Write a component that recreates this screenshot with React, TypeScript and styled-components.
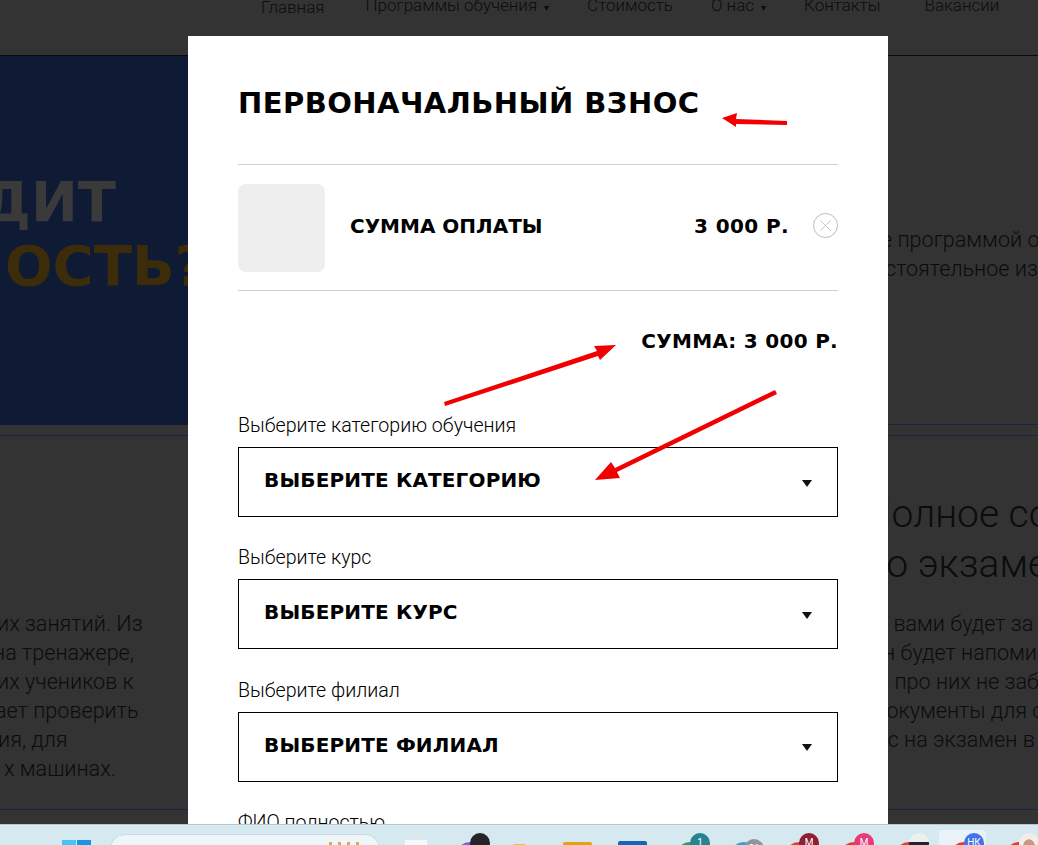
import React from "react";
import styled, { createGlobalStyle } from "styled-components";

const GlobalStyle = createGlobalStyle`
  html, body {
    margin: 0;
    padding: 0;
    background: #333333;
    font-family: "Roboto", "Liberation Sans", sans-serif;
  }
`;

const fields = [
  { label: "Выберите категорию обучения", value: "Выберите категорию" },
  { label: "Выберите курс", value: "Выберите курс" },
  { label: "Выберите филиал", value: "Выберите филиал" },
];

const navItems = [
  { text: "Главная", gap: 261, low: true },
  { text: "Программы обучения", gap: 41, caret: true },
  { text: "Стоимость", gap: 38 },
  { text: "О нас", gap: 38, caret: true },
  { text: "Контакты", gap: 38 },
  { text: "Вакансии", gap: 44 },
];

const leftLines = [
  { text: "их занятий. Из", x: -3 },
  { text: "на тренажере,", x: -7 },
  { text: "их учеников к", x: -3 },
  { text: "ает проверить", x: -5 },
  { text: "ия, для", x: -2 },
  { text: "х машинах.", x: 4 },
];

const rightLines = [
  { text: "с вами будет за", x: -8 },
  { text: "он будет напоми", x: -14 },
  { text: "и про них не забудет", x: -8 },
  { text: "документы для сдачи", x: -11 },
  { text: "вас на экзамен в", x: -21 },
];

const trayIcons = [
  { gap: 29, back: "#7c5fd6", front: "#26232b" },
  { gap: 29, back: "#2e9a63", front: "#25848f", badge: "1" },
  { gap: 20, back: "#2f9fe0", front: "#8f9498", badge: "01", low: true },
  { gap: 21, back: "#e53d2b", front: "#8f1f33", badge: "М" },
  { gap: 21, back: "#e53d2b", front: "#e83a78", badge: "М" },
  { gap: 21, back: "#e53d2b", front: "linear-gradient(#eef0ea 0 45%, #23262a 45% 70%, #eef0ea 70%)" },
  { gap: 21, back: "#e53d2b", front: "#3f73e6", badge: "НК", active: true },
  { gap: 21, back: "#e53d2b", front: "radial-gradient(circle at 50% 60%, #c99a80 0 35%, #f1eee8 37%)" },
];

export default function App() {
  return (
    <Screen>
      <GlobalStyle />
      <Site>
        <Header>
          <Nav>
            {navItems.map((item) => (
              <NavItem key={item.text} $gap={item.gap} $low={item.low}>
                {item.text}
                {item.caret && <NavCaret>▾</NavCaret>}
              </NavItem>
            ))}
          </Nav>
        </Header>

        <Hero>
          <HeroBanner>
            <HeroLine>ДИТ</HeroLine>
            <HeroLine $accent>ОСТЬ?</HeroLine>
          </HeroBanner>
          <HeroAside>
            <AsideLine $x={0}>е программой обучения</AsideLine>
            <AsideLine $x={4}>стоятельное изучение</AsideLine>
          </HeroAside>
        </Hero>
        <Strip />

        <Lower>
          <LowerLeft>
            {leftLines.map((line) => (
              <BodyLine key={line.text} $x={line.x}>
                {line.text}
              </BodyLine>
            ))}
          </LowerLeft>
          <LowerRight>
            <BigLine>Полное сопровождение</BigLine>
            <BigLine>до экзамена</BigLine>
            <RightBody>
              {rightLines.map((line) => (
                <BodyLine key={line.text} $x={line.x}>
                  {line.text}
                </BodyLine>
              ))}
            </RightBody>
          </LowerRight>
        </Lower>
        <FootLine />

        <Modal>
          <Title>Первоначальный взнос</Title>
          <CartRow>
            <Thumb />
            <ItemName>Сумма оплаты</ItemName>
            <ItemPrice>3 000 р.</ItemPrice>
            <RemoveIcon viewBox="0 0 25 25">
              <circle cx="12.5" cy="12.5" r="12" fill="none" stroke="#bbb" strokeWidth="1" />
              <path d="M7.5 7.5 L17.5 17.5 M17.5 7.5 L7.5 17.5" stroke="#c4c4c4" strokeWidth="1" />
            </RemoveIcon>
          </CartRow>
          <Total>Сумма: 3 000 р.</Total>
          <Form>
            {fields.map((field) => (
              <Field key={field.label}>
                <FieldLabel>{field.label}</FieldLabel>
                <SelectBox>
                  <SelectText>{field.value}</SelectText>
                  <SelectCaret />
                </SelectBox>
              </Field>
            ))}
            <Field>
              <FieldLabel>ФИО полностью</FieldLabel>
            </Field>
          </Form>
        </Modal>

        <Arrows viewBox="0 0 1038 824">
          <polygon points="722,118 737,113 736,119 787,121 787,125 736,124 736,127" fill="#f00000" />
          <polygon points="616,345 600,360 598,356 445,406 444,402 597,351 594,346" fill="#f00000" />
          <polygon points="595,480 611,462 615,468 775,390 777,394 617,472 620,478" fill="#f00000" />
        </Arrows>
      </Site>

      <Taskbar>
        <WinLogo>
          <WinPane $light />
          <WinPane />
        </WinLogo>
        <SearchPill>
          <SearchDoodle />
        </SearchPill>
        <WhiteTile />
        {trayIcons.map((icon, i) => (
          <React.Fragment key={i}>
            <AppIcon $gap={icon.gap} $back={icon.back} $active={icon.active}>
              <AppFace $color={icon.front} $low={icon.low}>
                {icon.badge}
              </AppFace>
            </AppIcon>
            {i === 0 && (
              <>
                <FolderTab $color="#f3c234" $gap={23} $width={13} $top={19} />
                <FolderTab $color="#dfa40e" $gap={37} $width={29} $top={17} />
                <FolderTab $color="#1766b8" $gap={26} $width={29} $top={16} />
              </>
            )}
          </React.Fragment>
        ))}
      </Taskbar>
    </Screen>
  );
}

const displayFont = `"DejaVu Sans", "Liberation Sans", sans-serif`;

const Screen = styled.div`
  width: 1038px;
  height: 845px;
  overflow: hidden;
  display: flex;
  flex-direction: column;
`;

const Site = styled.div`
  position: relative;
  height: 824px;
  flex-shrink: 0;
  overflow: hidden;
  background: #333333;
  color: #0c0c0c;
`;

const Header = styled.header`
  display: flow-root;
  height: 55px;
  border-bottom: 1px solid #0a0a0a;
`;

const Nav = styled.nav`
  display: flex;
  margin-top: -4px;
  white-space: nowrap;
`;

const NavItem = styled.span<{ $gap: number; $low?: boolean }>`
  margin-left: ${(p) => p.$gap}px;
  margin-top: ${(p) => (p.$low ? 2 : 0)}px;
  font-size: 17px;
  line-height: 19px;
  font-weight: 300;
`;

const NavCaret = styled.span`
  margin-left: 7px;
  font-size: 10px;
`;

const Hero = styled.section`
  display: flex;
  height: 369px;
`;

const HeroBanner = styled.div`
  width: 600px;
  flex-shrink: 0;
  background: #0f1a35;
  padding-top: 114px;
  box-sizing: border-box;
`;

const HeroLine = styled.div<{ $accent?: boolean }>`
  font-family: ${displayFont};
  font-weight: 700;
  font-size: 56px;
  line-height: 64px;
  white-space: nowrap;
  color: ${(p) => (p.$accent ? "#3c2c0a" : "#3a3a3a")};
  margin-left: ${(p) => (p.$accent ? 5 : -19)}px;
`;

const HeroAside = styled.div`
  flex: 1;
  border-bottom: 1px solid #1a2340;
  padding: 169px 0 0 281px;
  white-space: nowrap;
`;

const AsideLine = styled.div<{ $x: number }>`
  margin-left: ${(p) => p.$x}px;
  font-size: 21.6px;
  line-height: 29px;
  font-weight: 300;
`;

const Strip = styled.div`
  height: 10px;
  border-bottom: 1px solid #1a2340;
`;

const Lower = styled.section`
  display: flex;
  justify-content: space-between;
  height: 373px;
  white-space: nowrap;
`;

const LowerLeft = styled.div`
  padding-top: 173px;
`;

const LowerRight = styled.div`
  width: 153px;
  padding-top: 53px;
`;

const BigLine = styled.div`
  font-size: 39px;
  line-height: 50px;
  font-weight: 300;
  margin-left: -21px;
`;

const RightBody = styled.div`
  padding-top: 20px;
`;

const BodyLine = styled.div<{ $x: number }>`
  margin-left: ${(p) => p.$x}px;
  font-size: 21.6px;
  line-height: 29px;
  font-weight: 300;
`;

const FootLine = styled.div`
  border-top: 1px solid #1a2340;
`;

const Modal = styled.div`
  position: absolute;
  left: 188px;
  top: 36px;
  width: 700px;
  height: 788px;
  overflow: hidden;
  box-sizing: border-box;
  padding: 0 50px;
  background: #ffffff;
  color: #000000;
`;

const Title = styled.h2`
  margin: 0;
  height: 129px;
  padding-top: 50px;
  box-sizing: border-box;
  font-family: ${displayFont};
  font-weight: 700;
  font-size: 29px;
  line-height: 34px;
  letter-spacing: 0.45px;
  text-transform: uppercase;
  white-space: nowrap;
  border-bottom: 1px solid #cfcfcf;
`;

const CartRow = styled.div`
  display: flex;
  align-items: center;
  height: 125px;
  border-bottom: 1px solid #cfcfcf;
`;

const Thumb = styled.div`
  width: 87px;
  height: 88px;
  border-radius: 8px;
  background: #eeeeee;
`;

const ItemName = styled.div`
  flex: 1;
  margin: -4px 0 0 25px;
  font-family: ${displayFont};
  font-weight: 700;
  font-size: 20px;
  line-height: 24px;
  text-transform: uppercase;
`;

const ItemPrice = styled.div`
  margin-top: -4px;
  font-family: ${displayFont};
  font-weight: 700;
  font-size: 20px;
  line-height: 24px;
  letter-spacing: 0.4px;
  text-transform: uppercase;
  white-space: nowrap;
`;

const RemoveIcon = styled.svg`
  width: 25px;
  height: 25px;
  margin: -5px 0 0 24px;
`;

const Total = styled.div`
  margin-top: 38px;
  text-align: right;
  font-family: ${displayFont};
  font-weight: 700;
  font-size: 20px;
  line-height: 24px;
  letter-spacing: 0.3px;
  text-transform: uppercase;
`;

const Form = styled.div`
  margin-top: 61px;
  display: flex;
  flex-direction: column;
  gap: 29.25px;
`;

const Field = styled.div`
  display: flex;
  flex-direction: column;
  gap: 9px;
`;

const FieldLabel = styled.div`
  font-size: 19.6px;
  line-height: 24px;
  font-weight: 300;
`;

const SelectBox = styled.div`
  display: flex;
  align-items: center;
  justify-content: space-between;
  height: 70px;
  box-sizing: border-box;
  padding: 0 24px 0 25px;
  border: 1px solid #000000;
`;

const SelectText = styled.span`
  font-family: ${displayFont};
  font-weight: 700;
  font-size: 20px;
  line-height: 24px;
  letter-spacing: 0.15px;
  text-transform: uppercase;
  margin-top: -4px;
`;

const SelectCaret = styled.span`
  width: 0;
  height: 0;
  margin-top: 2px;
  margin-right: 1px;
  border-left: 5.5px solid transparent;
  border-right: 5.5px solid transparent;
  border-top: 7px solid #111111;
`;

const Arrows = styled.svg`
  position: absolute;
  left: 0;
  top: 0;
  width: 1038px;
  height: 824px;
  pointer-events: none;
`;

const Taskbar = styled.footer`
  display: flex;
  height: 21px;
  flex-shrink: 0;
  box-sizing: border-box;
  overflow: hidden;
  padding-left: 62px;
  background: #d6e9f0;
  border-top: 1px solid #b9c7cb;
`;

const WinLogo = styled.div`
  display: flex;
  flex-shrink: 0;
  gap: 1px;
  margin-top: 15px;
`;

const WinPane = styled.div<{ $light?: boolean }>`
  width: 14px;
  height: 14px;
  background: ${(p) => (p.$light ? "#47c3f6" : "#1c94e6")};
`;

const SearchPill = styled.div`
  position: relative;
  flex-shrink: 0;
  width: 270px;
  height: 30px;
  margin: 9px 0 0 19px;
  border: 1px solid #c6dde5;
  border-radius: 16px;
  background: #eef6f9;
  box-sizing: border-box;
`;

const SearchDoodle = styled.span`
  position: absolute;
  left: 218px;
  top: 7px;
  width: 36px;
  height: 12px;
  background: repeating-linear-gradient(90deg, #e3a35a 0 3px, transparent 3px 9px);
`;

const WhiteTile = styled.div`
  width: 22px;
  height: 20px;
  flex-shrink: 0;
  margin: 15px 0 0 25px;
  background: #f7f8f8;
`;

const AppIcon = styled.div<{ $gap: number; $back: string; $active?: boolean }>`
  position: relative;
  isolation: isolate;
  width: 34px;
  height: 30px;
  flex-shrink: 0;
  margin-left: ${(p) => p.$gap}px;

  &::before {
    content: "";
    position: absolute;
    left: 0;
    top: 17px;
    width: 28px;
    height: 28px;
    border-radius: 50%;
    background: ${(p) => p.$back};
  }

  &::after {
    content: "";
    display: ${(p) => (p.$active ? "block" : "none")};
    position: absolute;
    z-index: -1;
    left: -11px;
    right: -2px;
    top: 5px;
    height: 30px;
    border-radius: 4px;
    background: #e9f2f6;
  }
`;

const AppFace = styled.span<{ $color: string; $low?: boolean }>`
  position: absolute;
  right: 0;
  top: ${(p) => (p.$low ? 14 : 8)}px;
  width: 20px;
  height: 20px;
  border-radius: 50%;
  background: ${(p) => p.$color};
  color: #ffffff;
  font-size: 10px;
  line-height: 20px;
  text-align: center;
`;

const FolderTab = styled.div<{ $color: string; $gap: number; $width: number; $top: number }>`
  width: ${(p) => p.$width}px;
  height: 12px;
  flex-shrink: 0;
  margin: ${(p) => p.$top}px 0 0 ${(p) => p.$gap}px;
  background: ${(p) => p.$color};
  border-radius: 2px 2px 0 0;
`;
